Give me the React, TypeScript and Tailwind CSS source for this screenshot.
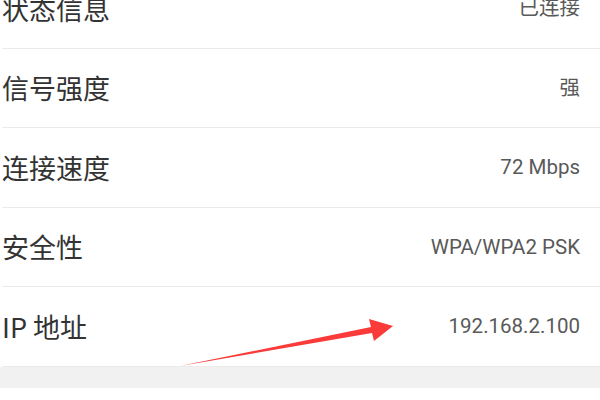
const rows = [
  { label: "状态信息", value: "已连接" },
  { label: "信号强度", value: "强" },
  { label: "连接速度", value: "72 Mbps" },
  { label: "安全性", value: "WPA/WPA2 PSK" },
  { label: "IP 地址", value: "192.168.2.100" },
];

export default function App() {
  return (
    <div className="relative w-[600px] h-[400px] overflow-hidden bg-white">
      <div className="mt-[-31px]">
        {rows.map((r) => (
          <div
            key={r.label}
            className="ml-[2px] h-[79.5px] flex items-center justify-between border-b border-[#ebebeb] pr-5"
          >
            <span
              className="text-[27px] text-[#333] leading-none"
              style={{ fontFamily: '"Noto Sans CJK SC", "Noto Sans", sans-serif' }}
            >
              {r.label}
            </span>
            <span
              className="text-[20.5px] text-[#595959] leading-none"
              style={{ fontFamily: 'Roboto, "Noto Sans CJK SC", sans-serif' }}
            >
              {r.value}
            </span>
          </div>
        ))}
      </div>
      <div className="h-[21px] bg-[#f1f1f1]" />

      {/* red annotation arrow */}
      <svg className="absolute left-0 top-0" width="600" height="400" viewBox="0 0 600 400">
        <polygon
          points="180,366 371,327 369,319 393,326 374,341 372,333"
          fill="#fb3a3a"
        />
      </svg>
    </div>
  );
}
